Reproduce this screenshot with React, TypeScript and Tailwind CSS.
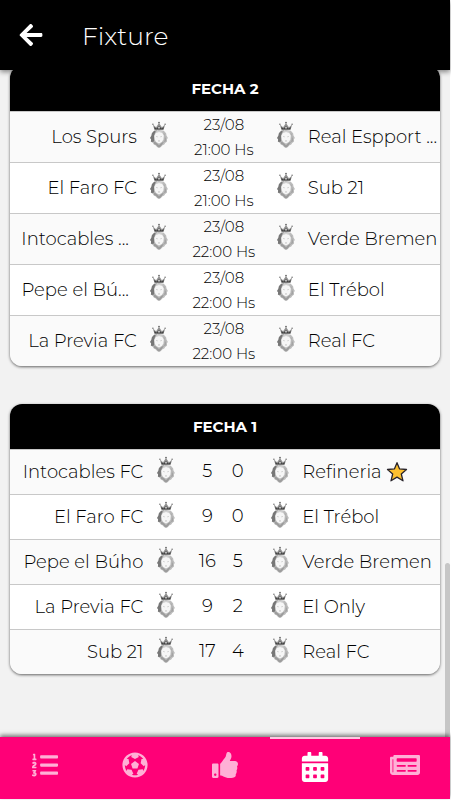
import { FaArrowLeft, FaCalendarAlt, FaFutbol, FaListOl, FaNewspaper, FaThumbsUp } from "react-icons/fa";

const upcoming = [
    { home: "Los Spurs", away: "Real Espport ...", date: "23/08", time: "21:00 Hs" },
    { home: "El Faro FC", away: "Sub 21", date: "23/08", time: "21:00 Hs" },
    { home: "Intocables ...", away: "Verde Bremen", date: "23/08", time: "22:00 Hs" },
    { home: "Pepe el Bú...", away: "El Trébol", date: "23/08", time: "22:00 Hs" },
    { home: "La Previa FC", away: "Real FC", date: "23/08", time: "22:00 Hs" },
];

const results = [
    { home: "Intocables FC", homeGoals: 5, awayGoals: 0, away: "Refineria", star: true },
    { home: "El Faro FC", homeGoals: 9, awayGoals: 0, away: "El Trébol" },
    { home: "Pepe el Búho", homeGoals: 16, awayGoals: 5, away: "Verde Bremen" },
    { home: "La Previa FC", homeGoals: 9, awayGoals: 2, away: "El Only" },
    { home: "Sub 21", homeGoals: 17, awayGoals: 4, away: "Real FC" },
];

const tabs = [
    { label: "Posiciones", icon: FaListOl, size: 26 },
    { label: "Partidos", icon: FaFutbol, size: 26 },
    { label: "Votar", icon: FaThumbsUp, size: 26 },
    { label: "Fixture", icon: FaCalendarAlt, size: 30, active: true },
    { label: "Noticias", icon: FaNewspaper, size: 30 },
];

const Crest: React.FC = () => (
    <svg width="20" height="28" viewBox="0 0 20 28" className="mx-auto block" aria-hidden="true">
        {/* crown */}
        <path d="M5.4 8.8 3.8 3.4l3.3 2.8L10 2l2.9 4.2 3.3-2.8-1.6 5.4Z" fill="#909090" />
        <path d="m5.8 8.6-.8-2.6 2.6 1.4L10 4.8l2.4 2.6L15 6l-.8 2.6Z" fill="#444" />
        <path d="M9.2 5.8h1.6v1.8H9.2z" fill="#d8d8d8" />
        <circle cx="3.9" cy="3.3" r=".8" fill="#777" />
        <circle cx="10" cy="1.6" r=".9" fill="#666" />
        <circle cx="16.1" cy="3.3" r=".8" fill="#777" />
        {/* mane */}
        <path d="M5.2 9.8 10 9l4.8.8 2.3 2.4.4 2.4 1.4 2.4-1.1 1.2.3 2.4-1.9 1.3-1 1.7-2.1.8-1.1 1.7-2 .9-2-.9-1.1-1.7-2.1-.8-1-1.7-1.9-1.3.3-2.4-1.1-1.2 1.4-2.4.4-2.4Z" fill="#bcbcbc" />
        <path d="m5.2 9.8 3-.3-2.4 2.7-.7 3.3.4 3.2-1 2.3-2.6-.3.2-2.4-1-1.3 1.4-2.4.4-2.4Z" fill="#777" />
        <path d="m14.5 11.8 1.4 3.2-.4 4.3-1.1 2 2.6-1 .2-2.2-.7-1.3-.7-3.6Z" fill="#a3a3a3" />
        <path d="m4.6 20.2 2.6 1.4 2.8 2.6 2.8-2.6 2.1-.6-1.7 2.4-1.5 2.2-1.7 1-1.7-1-1.1-1.7-2.1-.8Z" fill="#9c9c9c" />
        <path d="M6 10.7q4-1.6 8 0l-1 1q-3-.8-6 0Z" fill="#d4d4d4" />
        {/* face */}
        <path d="m6.8 12 3.2-.9 3.4.9 1.4 2.8-.4 3.8-1.6 2.4-2.8 1.6-2.8-1.6-1.6-2.4-.3-3.8Z" fill="#f6f6f6" />
        <path d="m7 15.4 1.8.5m4.2-.5-1.8.5M9 19.4l1 .6 1-.6m-1 .6v1" stroke="#c4c4c4" strokeWidth=".7" fill="none" />
    </svg>
);

const Star: React.FC = () => (
    <svg width="22" height="22" viewBox="0 0 22 22" className="ml-1 shrink-0" role="img" aria-label="Destacado">
        <path
            d="m11 1.7 2.6 6.2 6.9.6-5.2 4.5 1.7 6.8-6-3.7-6 3.7L6.7 13 1.5 8.5l6.9-.6Z"
            fill="#fdc02f"
            stroke="#28242b"
            strokeWidth="1.3"
            strokeLinejoin="round"
        />
    </svg>
);

const CardHead: React.FC<{ title: string; span: number }> = ({ title, span }) => (
    <thead>
        <tr className="h-[45px] border-b border-[#c8c8c8] bg-black">
            <th colSpan={span} className="pt-0.5 text-[15px] leading-5 font-bold text-white">{title}</th>
        </tr>
    </thead>
);

const App: React.FC = () => {
    return (
        <div className="flex min-h-screen w-full flex-col bg-white pr-px pb-px font-[Montserrat,Inter,sans-serif] font-light text-black">
            <header className="z-10 flex h-[70px] items-center gap-[38px] bg-black pl-[18px] text-white shadow-[0_2px_5px_rgba(0,0,0,0.45)]">
                <button type="button" aria-label="Volver">
                    <FaArrowLeft size={26} />
                </button>
                <h1 className="pt-0.5 text-[25px] leading-8">Fixture</h1>
            </header>

            <main className="relative -mt-1 flex flex-1 flex-col gap-[38px] bg-[#f2f2f2] px-[10px] pb-8">
                <section className="overflow-hidden rounded-xl shadow-[0_1px_3px_rgba(0,0,0,0.6)]">
                    <table className="w-full table-fixed border-collapse">
                        <colgroup>
                            <col className="w-[29.5%]" />
                            <col className="w-[45px]" />
                            <col className="w-[84px]" />
                            <col className="w-[40px]" />
                            <col />
                        </colgroup>
                        <CardHead title="FECHA 2" span={5} />
                        <tbody>
                            {upcoming.map((match) => (
                                <tr key={match.home} className="h-[51px] border-b border-[#c8c8c8] bg-white odd:bg-[#fafafa] last:border-b-0">
                                    <td className={match.home.endsWith("...") ? "pr-2 text-right text-[18px] leading-6 whitespace-nowrap" : "text-right text-[18px] leading-6 whitespace-nowrap"}>
                                        {match.home}
                                    </td>
                                    <td className="pb-1"><Crest /></td>
                                    <td className="pt-0.5 text-center text-[15px] leading-5 whitespace-nowrap">
                                        <div className="flex flex-col gap-[5px]">
                                            <span>{match.date}</span>
                                            <span>{match.time}</span>
                                        </div>
                                    </td>
                                    <td className="pb-1"><Crest /></td>
                                    <td className="pl-0.5 text-[18px] leading-6 whitespace-nowrap">{match.away}</td>
                                </tr>
                            ))}
                        </tbody>
                    </table>
                </section>

                <section className="overflow-hidden rounded-xl shadow-[0_1px_3px_rgba(0,0,0,0.6)]">
                    <table className="w-full table-fixed border-collapse">
                        <colgroup>
                            <col className="w-[31%]" />
                            <col className="w-[46px]" />
                            <col className="w-[36px]" />
                            <col className="w-[25px]" />
                            <col className="w-[52px]" />
                            <col />
                        </colgroup>
                        <CardHead title="FECHA 1" span={6} />
                        <tbody>
                            {results.map((match) => (
                                <tr key={match.home} className="h-[45px] border-b border-[#c8c8c8] bg-white odd:bg-[#fafafa] last:border-b-0">
                                    <td className="text-right text-[18px] leading-6 whitespace-nowrap">{match.home}</td>
                                    <td className="pb-1"><Crest /></td>
                                    <td className="pb-0.5 text-center text-[18px] leading-6">{match.homeGoals}</td>
                                    <td className="pb-0.5 text-center text-[18px] leading-6">{match.awayGoals}</td>
                                    <td className="pb-1 pl-2"><Crest /></td>
                                    <td className="text-[18px] leading-6 whitespace-nowrap">
                                        <span className="flex items-center">
                                            {match.away}
                                            {match.star && <Star />}
                                        </span>
                                    </td>
                                </tr>
                            ))}
                        </tbody>
                    </table>
                </section>

                {/* scroll thumb */}
                <div className="absolute right-0 bottom-0 h-[174px] w-[5px] rounded-t-sm bg-[#c6c6c6]" />
            </main>

            <nav className="z-10 grid h-[62px] grid-cols-5 bg-[#ff0077] shadow-[0_-2px_4px_rgba(0,0,0,0.5)]">
                {tabs.map(({ label, icon: Icon, size, active }) => (
                    <button
                        key={label}
                        type="button"
                        aria-label={label}
                        className={
                            active
                                ? "flex items-center justify-center border-t-2 border-[#ffc9e2] pb-1 text-white"
                                : "flex items-center justify-center pb-1.5 text-[#ffb0d6]"
                        }
                    >
                        <Icon size={size} />
                    </button>
                ))}
            </nav>
        </div>
    );
};

export default App;
